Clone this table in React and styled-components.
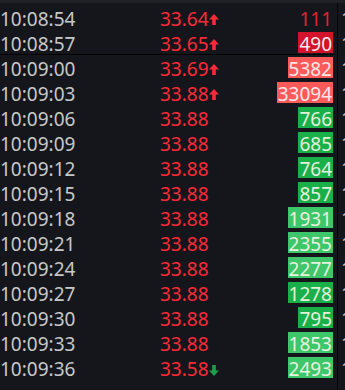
import React from 'react';
import styled, {createGlobalStyle} from 'styled-components';

const GlobalStyle = createGlobalStyle`
  html, body {
    margin: 0;
    padding: 0;
    background: #14161b;
    overflow: hidden;
  }
  body {
    font-family: "Noto Sans", "Open Sans", sans-serif;
  }
`;

const Screen = styled.div`
  width: 345px;
  height: 390px;
  display: flex;
  flex-direction: column;
  background: #14161b;
  overflow: hidden;
`;

const TopStrip = styled.div`
  height: 3px;
  flex: none;
  background: #1f2126;
`;

const Columns = styled.div`
  flex: 1;
  display: flex;
  overflow: hidden;
`;

const Panel = styled.div`
  width: 333px;
  flex: none;
  padding: 4px 4px 0 0;
  border-right: 1px solid #06070a;
`;

const NextPanel = styled.div`
  flex: 1;
  padding: 4px 0 0 3px;
  overflow: hidden;
  white-space: nowrap;
`;

const Row = styled.div`
  display: flex;
  height: 25px;
  line-height: 25px;
  font-size: 19px;
  white-space: nowrap;
`;

const Divider = styled.div`
  height: 1px;
  margin: -3px 0 2px;
  background: #000;
`;

const Time = styled.div`
  width: 160px;
  flex: none;
  color: #c8c8c8;
`;

const Price = styled.div`
  display: flex;
  align-items: flex-start;
  color: ${props => props.color};
`;

const Arrow = styled.svg`
  width: 10px;
  height: 11px;
  margin-top: ${props => (props.down ? '8px' : '7px')};
  flex: none;
`;

const Volume = styled.div`
  flex: 1;
  display: flex;
  justify-content: flex-end;
`;

const Badge = styled.span`
  display: inline-block;
  height: 21px;
  padding: 0 1px;
  color: ${props => props.fg};
  background: ${props => props.bg || 'transparent'};
`;

const PRICE_RED = '#fb2a38';

const COLORS = {
  plain: {fg: '#e4222e'},
  crimson: {fg: '#f4e8ea', bg: '#d2132b'},
  salmon: {fg: '#fde8e8', bg: '#ff5a5a'},
  green: {fg: '#e4f0dc', bg: '#19b04a'},
  lime: {fg: '#e8f2de', bg: '#3ec66a'},
};

const rows = [
  {time: '10:08:54', price: '33.64', dir: 'up', vol: '111', tone: 'plain'},
  {time: '10:08:57', price: '33.65', dir: 'up', vol: '490', tone: 'crimson', divider: true},
  {time: '10:09:00', price: '33.69', dir: 'up', vol: '5382', tone: 'salmon'},
  {time: '10:09:03', price: '33.88', dir: 'up', vol: '33094', tone: 'salmon'},
  {time: '10:09:06', price: '33.88', vol: '766', tone: 'green'},
  {time: '10:09:09', price: '33.88', vol: '685', tone: 'green'},
  {time: '10:09:12', price: '33.88', vol: '764', tone: 'green'},
  {time: '10:09:15', price: '33.88', vol: '857', tone: 'green'},
  {time: '10:09:18', price: '33.88', vol: '1931', tone: 'lime'},
  {time: '10:09:21', price: '33.88', vol: '2355', tone: 'lime'},
  {time: '10:09:24', price: '33.88', vol: '2277', tone: 'lime'},
  {time: '10:09:27', price: '33.88', vol: '1278', tone: 'green'},
  {time: '10:09:30', price: '33.88', vol: '795', tone: 'green'},
  {time: '10:09:33', price: '33.88', vol: '1853', tone: 'lime'},
  {time: '10:09:36', price: '33.58', dir: 'down', vol: '2493', tone: 'lime'},
];

const UpArrow = () => (
  <Arrow viewBox="0 0 10 11">
    <path d="M5 0 L10 5.5 L6.8 5.5 L6.8 11 L3.2 11 L3.2 5.5 L0 5.5 Z" fill="#fb2a38" />
  </Arrow>
);

const DownArrow = () => (
  <Arrow down viewBox="0 0 10 11">
    <path d="M3.2 0 L6.8 0 L6.8 5.5 L10 5.5 L5 11 L0 5.5 L3.2 5.5 Z" fill="#1d9f4a" />
  </Arrow>
);

const TradeRow = ({time, price, dir, vol, tone}) => (
  <Row>
    <Time>{time}</Time>
    <Price color={PRICE_RED}>
      {price}
      {dir === 'up' && <UpArrow />}
      {dir === 'down' && <DownArrow />}
    </Price>
    <Volume>
      <Badge {...COLORS[tone]}>{vol}</Badge>
    </Volume>
  </Row>
);

export default function App() {
  return (
    <Screen>
      <GlobalStyle />
      <TopStrip />
      <Columns>
        <Panel>
          {rows.map(r => (
            <React.Fragment key={r.time}>
              <TradeRow {...r} />
              {r.divider && <Divider />}
            </React.Fragment>
          ))}
        </Panel>
        <NextPanel>
          {rows.map(r => (
            <Row key={r.time}>
              <Time>{r.time}</Time>
            </Row>
          ))}
        </NextPanel>
      </Columns>
    </Screen>
  );
}
